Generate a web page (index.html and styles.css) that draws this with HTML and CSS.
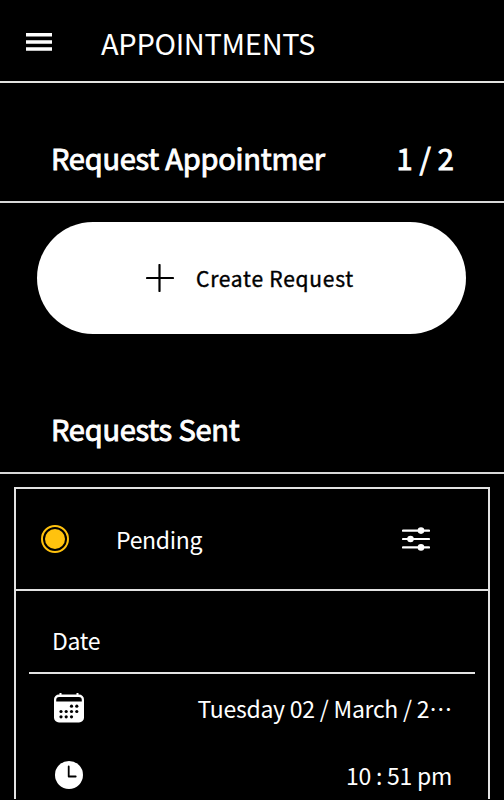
FILE: index.html
```html
<!DOCTYPE html>
<html lang="en">
<head>
	<meta charset="utf-8">
	<title>Appointments</title>
	<link rel="stylesheet" href="styles.css">
</head>
<body>
<header class="topbar">
	<svg class="menu" width="26" height="20" viewBox="0 0 26 20" fill="#fff"><path d="M0 1h26v3.6H0zM0 8.2h26v3.6H0zM0 15.200h26v3.6H0z"/></svg>
	<h1 class="title">APPOINTMENTS</h1>
</header>
<section class="heading">
	<h2 class="heading-name">Request Appointmer</h2>
	<span class="counter">1 / 2</span>
</section>
<button class="create">
	<svg width="28" height="28" viewBox="0 0 28 28" fill="none" stroke="#000" stroke-width="2.200" stroke-linecap="round"><path d="M13.500 1v26M1 14h26"/></svg>
	<span>Create Request</span>
</button>
<section class="heading sent">
	<h2 class="heading-name">Requests Sent</h2>
</section>
<article class="card">
	<div class="status">
		<svg class="dot" width="28" height="28" viewBox="0 0 28 28"><circle cx="14" cy="14" r="13" fill="none" stroke="#ffc20e" stroke-width="2"/><circle cx="14" cy="14" r="10" fill="#ffc20e"/></svg>
		<span class="status-name">Pending</span>
		<svg class="filter" width="28" height="24" viewBox="0 0 28 24" fill="#fff"><path d="M1 3.6h26M1 12h26M1 20.4h26" stroke="#fff" stroke-width="2.2" stroke-linecap="round"/><circle cx="19" cy="3.6" r="3.3"/><circle cx="8.5" cy="12" r="3.3"/><circle cx="19" cy="20.4" r="3.3"/></svg>
	</div>
	<div class="label">Date</div>
	<div class="row">
		<svg class="calendar" width="30" height="30" viewBox="0 0 30 30"><path d="M6.5 0v4M23.5 0v4" stroke="#fff" stroke-width="2"/><rect y="1.5" width="30" height="28" rx="5" fill="#fff"/><path d="M2.2 8.5V7q0-3 3-3h19.6q3 0 3 3v1.500z"/><g><circle cx="17.500" cy="13.200" r="1.600"/><circle cx="22.800" cy="13.200" r="1.600"/><circle cx="7" cy="18.500" r="1.600"/><circle cx="12.200" cy="18.500" r="1.600"/><circle cx="17.500" cy="18.500" r="1.600"/><circle cx="22.800" cy="18.500" r="1.600"/><circle cx="7" cy="23.800" r="1.600"/><circle cx="12.200" cy="23.800" r="1.600"/><circle cx="17.500" cy="23.800" r="1.600"/></g></svg>
		<span class="value">Tuesday 02 / March / 2<span lang="zh-CN">…</span></span>
	</div>
	<div class="row">
		<svg class="clock" width="28" height="28" viewBox="0 0 28 28"><circle cx="14" cy="14" r="14" fill="#fff"/><path d="M13.700 5.500v10h7" fill="none" stroke="#000" stroke-width="1.800" stroke-linecap="round" stroke-linejoin="round"/></svg>
		<span class="value">10 : 51 pm</span>
	</div>
</article>
</body>
</html>
```
FILE: styles.css
```css
* {
	box-sizing: border-box;
}

body {
	margin: 0;
	height: 800px;
	overflow: hidden;
	background: #000;
	color: #fff;
	font: 23px/36px "Noto Sans CJK SC", "Noto Sans", sans-serif;
	letter-spacing: -0.3px;
	word-spacing: 0.2px;
}

h1, h2 {
	margin: 0;
	font-weight: 400;
}

svg {
	display: block;
	flex: none;
}

.topbar {
	display: flex;
	height: 83px;
	padding: 0 26px;
	border-bottom: 2px solid #e3e3e0;
}

.menu {
	margin-top: 32px;
}

.title {
	margin: 20px 0 0 49px;
	font-size: 29px;
	line-height: 44px;
}

.heading {
	display: flex;
	justify-content: space-between;
	height: 120px;
	padding: 52px 50px 0 51px;
	border-bottom: 2px solid #d8d8d8;
	font-size: 29px;
	line-height: 44px;
	letter-spacing: -0.25px;
	-webkit-text-stroke: 0.9px #fff;
}

.heading-name {
	width: 276px;
	white-space: nowrap;
	font-size: 29px;
}

.counter {
	letter-spacing: 0.1px;
}

.create {
	display: flex;
	align-items: center;
	justify-content: center;
	gap: 22px;
	width: 429px;
	height: 112px;
	margin: 19px 0 0 37px;
	padding: 0 3px 0 0;
	border: 0;
	border-radius: 56px;
	background: #fff;
	color: #000;
	font: 400 21px/32px "Noto Sans CJK SC", "Noto Sans", sans-serif;
	letter-spacing: 0.75px;
	-webkit-text-stroke: 0.4px #000;
}

.sent {
	height: 140px;
	padding-top: 72px;
}

.card {
	height: 312px;
	margin: 13px 14px 0;
	border: 2px solid #e3e3e3;
	border-bottom: 0;
}

.status {
	display: flex;
	align-items: center;
	height: 102px;
	padding: 0 58px 0 25px;
	border-bottom: 2px solid #e3e3e3;
}

.status-name {
	margin-left: 47px;
}

.filter {
	margin-left: auto;
}

.label {
	height: 83px;
	margin: 0 13px;
	padding: 31px 23px 0;
	border-bottom: 2px solid #e3e3e3;
}

.row {
	display: flex;
	align-items: center;
	justify-content: space-between;
	height: 67px;
	padding: 0 36px 0 38px;
}

.clock {
	margin-left: 1px;
}
```
